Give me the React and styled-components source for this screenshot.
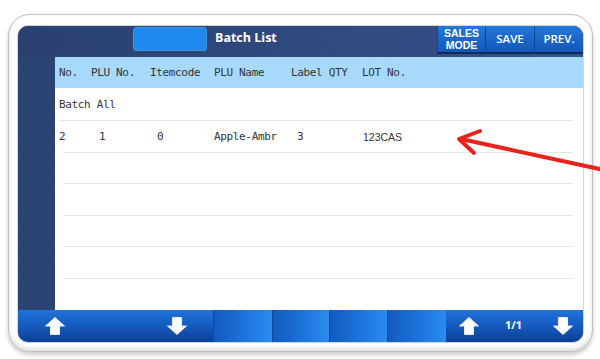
import React from "react";
import styled, { createGlobalStyle } from "styled-components";

const Global = createGlobalStyle`
  html, body { margin: 0; padding: 0; background: #ffffff; }
  body { width: 600px; height: 359px; overflow: hidden; position: relative; }
  * { box-sizing: border-box; }
`;

const Device = styled.div`
  margin: 14px 0 0 8px;
  width: 585px;
  height: 338px;
  padding: 11px 9px 9px 9px;
  background: #ffffff;
  border: 1.5px solid #c0c0c0;
  border-radius: 22px;
  box-shadow: 0 3px 4px rgba(0, 0, 0, 0.2), inset 0 -3px 4px rgba(0, 0, 0, 0.12);
`;

const Screen = styled.div`
  width: 565px;
  height: 316px;
  border-radius: 10px;
  overflow: hidden;
  display: flex;
  flex-direction: column;
  background: #2a4272;
  box-shadow: 0 0 0 1px #d6d6d6;
`;

const TopBar = styled.div`
  height: 31px;
  display: flex;
  align-items: flex-start;
  background:
    repeating-linear-gradient(45deg, rgba(255,255,255,0.015) 0 1px, transparent 1px 3px),
    linear-gradient(90deg, #293f70, #35518a);
  padding-left: 115px;
`;

const TitleField = styled.div`
  width: 74px;
  height: 24px;
  margin-top: 1px;
  border-radius: 3px;
  background: #1f88ec;
  border: 1px solid #3f93e2;
`;

const Title = styled.div`
  margin: 3px 0 0 8px;
  font-family: "Open Sans", sans-serif;
  font-weight: 700;
  font-size: 12.5px;
  color: #ffffff;
  flex: 1;
`;

const TopButton = styled.div`
  width: ${(p) => p.$w}px;
  height: 28px;
  display: flex;
  flex-direction: column;
  align-items: center;
  justify-content: center;
  text-align: center;
  font-family: "Open Sans", sans-serif;
  font-weight: 600;
  font-size: 11.5px;
  line-height: 14px;
  color: #ffffff;
  background: linear-gradient(180deg, #2378da 0%, #1a63c6 60%, #1558b8 100%);
  border-left: 1px solid #0e4593;
  border-bottom: 2px solid #0b2a58;
  border-top-right-radius: ${(p) => (p.$last ? 9 : 0)}px;
`;

const ButtonLine = styled.span`
  display: block;
  font-family: "Liberation Sans", Arial, sans-serif;
  font-weight: 700;
  font-size: 10.5px;
  line-height: 12.5px;
  height: 12.5px;
`;

const Middle = styled.div`
  flex: 1;
  display: flex;
`;

const SideRail = styled.div`
  width: 37px;
  background:
    repeating-linear-gradient(45deg, rgba(255,255,255,0.02) 0 1px, transparent 1px 3px),
    #2a4272;
`;

const Panel = styled.div`
  flex: 1;
  background: #ffffff;
  display: grid;
  grid-template-rows: 31px 33px repeat(6, 1fr);
`;

const cols = "32px 59px 64px 77px 71px 1fr";

const HeaderRow = styled.div`
  display: grid;
  grid-template-columns: ${cols};
  align-items: center;
  padding-left: 4px;
  background: #a7d9fb;
`;

const Row = styled.div`
  display: grid;
  grid-template-columns: ${cols};
  align-items: center;
  padding-left: 4px;
  position: relative;
  &::after {
    content: "";
    display: ${(p) => (p.$last ? "none" : "block")};
    position: absolute;
    left: ${(p) => p.$inset}px;
    right: 10px;
    bottom: 0;
    height: 1px;
    background: #e6e6e6;
  }
`;

const Cell = styled.div`
  font-family: "DejaVu Sans Mono", monospace;
  font-size: 11px;
  letter-spacing: -0.35px;
  color: #333333;
  white-space: nowrap;
  padding-left: ${(p) => p.$pad || 0}px;
  grid-column: ${(p) => p.$span || "auto"};
`;

const SansCell = styled(Cell)`
  font-family: "Liberation Sans", Arial, sans-serif;
  font-size: 10.5px;
  letter-spacing: 0;
`;

const BottomBar = styled.div`
  height: 32px;
  display: flex;
`;

const NavGroup = styled.div`
  width: ${(p) => p.$w}px;
  display: flex;
  align-items: center;
  position: relative;
  background: linear-gradient(180deg, #1f74da 0%, #155bbf 50%, #0b3f93 100%);
  border-bottom-left-radius: ${(p) => (p.$left ? 10 : 0)}px;
  border-bottom-right-radius: ${(p) => (p.$right ? 10 : 0)}px;
`;

const Slot = styled.div`
  width: ${(p) => p.$w}px;
  background: linear-gradient(90deg, #135ac0 0%, #1b6fd6 45%, #2a8cf0 100%);
  border-left: 1px solid #0f4a9c;
`;

const NavIcon = styled.div`
  position: absolute;
  left: ${(p) => p.$x}px;
  top: 7px;
  width: 20px;
  height: 18px;
  display: flex;
`;

const PageLabel = styled.div`
  position: absolute;
  left: 59px;
  top: 7px;
  font-family: "Open Sans", sans-serif;
  font-weight: 700;
  font-size: 11px;
  color: #ffffff;
`;

const Overlay = styled.svg`
  position: absolute;
  left: 0;
  top: 0;
  pointer-events: none;
`;

const Arrow = ({ down }) => (
  <svg width="20" height="18" viewBox="0 0 20 18">
    <path
      d="M10 0.5 L19.5 9 L14.5 9 L14.5 17.5 L5.5 17.5 L5.5 9 L0.5 9 Z"
      fill="#ffffff"
      stroke="#ffffff"
      strokeWidth="0.8"
      strokeLinejoin="round"
      transform={down ? "rotate(180 10 9)" : undefined}
    />
  </svg>
);

const headers = ["No.", "PLU No.", "Itemcode", "PLU Name", "Label QTY", "LOT No."];

export default function App() {
  return (
    <>
      <Global />
      <Device>
        <Screen>
          <TopBar>
            <TitleField />
            <Title>Batch List</Title>
            <TopButton $w={48}>
              <ButtonLine>SALES</ButtonLine>
              <ButtonLine>MODE</ButtonLine>
            </TopButton>
            <TopButton $w={49}>SAVE</TopButton>
            <TopButton $w={49} $last>
              PREV.
            </TopButton>
          </TopBar>
          <Middle>
            <SideRail />
            <Panel>
              <HeaderRow>
                {headers.map((h) => (
                  <Cell key={h}>{h}</Cell>
                ))}
              </HeaderRow>
              <Row $inset={4}>
                <Cell $span="1 / span 3">Batch All</Cell>
              </Row>
              <Row $inset={9}>
                <Cell>2</Cell>
                <Cell $pad={8}>1</Cell>
                <Cell $pad={7}>0</Cell>
                <Cell>Apple-Ambr</Cell>
                <Cell $pad={6}>3</Cell>
                <SansCell $pad={1}>123CAS</SansCell>
              </Row>
              <Row $inset={9} />
              <Row $inset={9} />
              <Row $inset={9} />
              <Row $inset={9} />
              <Row $inset={9} $last />
            </Panel>
          </Middle>
          <BottomBar>
            <NavGroup $w={195} $left>
              <NavIcon $x={27}>
                <Arrow />
              </NavIcon>
              <NavIcon $x={149}>
                <Arrow down />
              </NavIcon>
            </NavGroup>
            <Slot $w={59} />
            <Slot $w={57} />
            <Slot $w={58} />
            <Slot $w={59} />
            <NavGroup $w={137} $right>
              <NavIcon $x={13}>
                <Arrow />
              </NavIcon>
              <PageLabel>1/1</PageLabel>
              <NavIcon $x={107}>
                <Arrow down />
              </NavIcon>
            </NavGroup>
          </BottomBar>
        </Screen>
      </Device>
      <Overlay width="600" height="359" viewBox="0 0 600 359">
        <g stroke="#e8231c" strokeWidth="4" strokeLinecap="round" strokeLinejoin="round" fill="none">
          <line x1="604" y1="170" x2="461" y2="139" />
          <polyline points="480,131 459,139 474,153" />
        </g>
      </Overlay>
    </>
  );
}
